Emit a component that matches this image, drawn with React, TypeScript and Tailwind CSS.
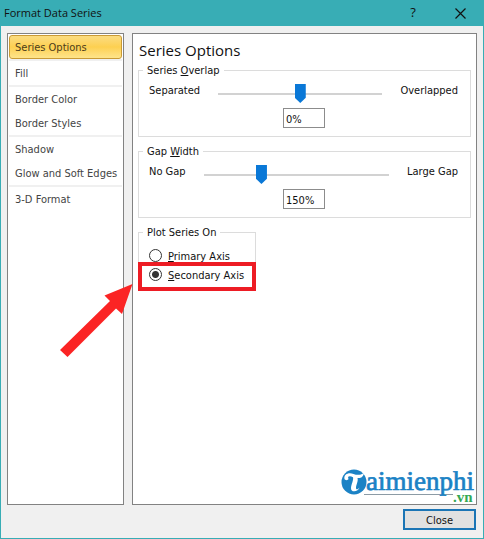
import { useState } from 'react';
import type { ReactNode } from 'react';

const sections = [
  ['Series Options'],
  ['Fill'],
  ['Border Color', 'Border Styles'],
  ['Shadow', 'Glow and Soft Edges'],
  ['3-D Format'],
];

function Group({ title, children }: { title: ReactNode; children: ReactNode }) {
  return (
    <fieldset className="border border-[#dcdcdc]">
      <legend className="ml-1 px-1 h-4 leading-[18px]">{title}</legend>
      {children}
    </fieldset>
  );
}

type SliderGroupProps = {
  title: ReactNode;
  name: string;
  low: string;
  high: string;
  min: number;
  max: number;
  initial: number;
};

function SliderGroup({ title, name, low, high, min, max, initial }: SliderGroupProps) {
  const [value, setValue] = useState(initial);

  return (
    <Group title={title}>
      <div className="flex flex-col h-[58px] pl-[10px] pr-3 pt-1">
        <div className="flex items-start gap-[18px]">
          <span className="shrink-0 leading-[18px]">{low}</span>
          <input
            type="range"
            aria-label={name}
            min={min}
            max={max}
            value={value}
            onChange={(e) => setValue(Number(e.target.value))}
            className="min-w-0 flex-1 mt-[2px] h-5 appearance-none bg-transparent [&::-webkit-slider-runnable-track]:h-[2px] [&::-webkit-slider-runnable-track]:bg-[#d2d2d2] [&::-webkit-slider-thumb]:appearance-none [&::-webkit-slider-thumb]:w-[11px] [&::-webkit-slider-thumb]:h-[19px] [&::-webkit-slider-thumb]:-mt-[9px] [&::-webkit-slider-thumb]:bg-[#0a78d7] [&::-webkit-slider-thumb]:[clip-path:polygon(0_0,100%_0,100%_72%,50%_100%,0_72%)]"
          />
          <span className="shrink-0 leading-[18px]">{high}</span>
        </div>
        <input
          type="text"
          aria-label={`${name} value`}
          value={`${value}%`}
          onChange={(e) => setValue(Math.min(max, Math.max(min, parseInt(e.target.value) || 0)))}
          className="mt-1 ml-[134px] w-[42px] h-5 shrink-0 border border-[#8c8c8c] bg-white px-[2px] pt-[2px]"
        />
      </div>
    </Group>
  );
}

function AxisOption({ value, checked, onChange, children }: { value: string; checked: boolean; onChange: () => void; children: ReactNode }) {
  return (
    <label className="flex items-center gap-[6px] h-[19px]">
      <input
        type="radio"
        name="axis"
        value={value}
        checked={checked}
        onChange={onChange}
        className="appearance-none size-[13px] rounded-full border border-[#333] bg-white checked:bg-[radial-gradient(circle,#333_3px,transparent_4px)]"
      />
      <span className="leading-4 pt-[2px]">{children}</span>
    </label>
  );
}

function Logo() {
  return (
    <svg className="absolute right-0 bottom-0 w-[136px] h-10" viewBox="0 -4 136 40">
      <circle cx="14" cy="14" r="12.5" fill="#1b82c5" />
      <path
        d="M4.500 11C3.500 6 9 4 13.500 6C17.500 7.500 20.500 7 24 5C23 9.500 20.500 10.500 17.500 10C18.500 13 16 17 16 20C16 22 18 21.500 19.500 19.500C18.500 24 10.500 25 11 20C11.300 16 13.800 12 13 9.200C10 7.800 7 8 8.500 11C8 12.500 5 12.500 4.500 11Z"
        fill="white"
      />
      <path d="M24 26.500H113" stroke="#8c9ba5" strokeWidth="1" />
      <text x="26" y="22" fontSize="27" fontFamily="Liberation Serif, serif" fill="#1b82c5" stroke="#1b82c5" strokeWidth=".7" textRendering="geometricPrecision">
        aimienphi
      </text>
      <text x="113" y="34" fontSize="15" fontWeight="bold" fontFamily="Liberation Serif, serif" fill="#35a853">
        .vn
      </text>
    </svg>
  );
}

export default function App() {
  const [section, setSection] = useState('Series Options');
  const [axis, setAxis] = useState('secondary');

  return (
    <div className="min-h-screen flex flex-col border border-t-0 border-[#38adb5] bg-[#f0f0f0] font-['DejaVu_Sans_Condensed','DejaVu_Sans',sans-serif] text-[11px] text-[#111]">
      <header className="flex items-center h-[26px] pl-[3px] pr-[17px] bg-[#38adb5]">
        <h1 className="flex-1 text-[11px] font-['Open_Sans',sans-serif]">Format Data Series</h1>
        <button aria-label="Help" className="w-3 mr-9 text-[13px] font-['Open_Sans',sans-serif]">?</button>
        <button aria-label="Close window">
          <svg className="size-[11px]" viewBox="0 0 11 11" fill="none" stroke="#111" strokeWidth="1.200">
            <path d="M.5.500l10 10M10.500.500l-10 10" />
          </svg>
        </button>
      </header>

      <div className="flex-1 flex gap-2 px-[6px] pt-[7px]">
        <nav className="w-[117px] shrink-0 border border-[#828282] bg-white p-px divide-y-2 divide-[#f0f0f0]">
          {sections.map((group) => (
            <div key={group[0]}>
              {group.map((item) => (
                <button
                  key={item}
                  onClick={() => setSection(item)}
                  className={`block w-full h-6 pl-[5px] pt-[2px] text-left whitespace-nowrap rounded-[3px] border ${
                    item === section
                      ? 'border-[#c99a35] bg-linear-to-b from-[#fbdc80] via-[#fdd050] to-[#fee48a] text-[#4b3c1c]'
                      : 'border-transparent text-[#444]'
                  }`}
                >
                  {item}
                </button>
              ))}
            </div>
          ))}
        </nav>

        <main className="relative flex-1 min-w-0 flex flex-col gap-[6px] border border-[#828282] bg-white px-[5px] pt-[6px]">
          <h2 className="pl-px h-4 leading-5 text-[15px] font-['Open_Sans',sans-serif]">Series Options</h2>
          <SliderGroup
            title={<>Series <u>O</u>verlap</>}
            name="Series Overlap"
            low="Separated"
            high="Overlapped"
            min={-100}
            max={100}
            initial={0}
          />
          <SliderGroup
            title={<>Gap <u>W</u>idth</>}
            name="Gap Width"
            low="No Gap"
            high="Large Gap"
            min={0}
            max={500}
            initial={150}
          />
          <div className="relative w-[118px]">
            <Group title="Plot Series On">
              <div className="h-[50px] pl-[10px] pt-[6px]">
                <AxisOption value="primary" checked={axis === 'primary'} onChange={() => setAxis('primary')}>
                  <u>P</u>rimary Axis
                </AxisOption>
                <AxisOption value="secondary" checked={axis === 'secondary'} onChange={() => setAxis('secondary')}>
                  <u>S</u>econdary Axis
                </AxisOption>
              </div>
            </Group>
            {/* Callout around the secondary axis option */}
            <div className="pointer-events-none absolute inset-x-0 bottom-0 h-[29px] border-4 border-[#ed1c24]" />
            <svg className="pointer-events-none absolute right-full top-[60px] w-[80px] h-[76px]" viewBox="0 0 80 76">
              <path d="M74.500 0L46.500 11.500L52 17L2 66L9.500 73L58 24.500L64 30Z" fill="#fb2424" />
            </svg>
          </div>
          <Logo />
        </main>
      </div>

      <footer className="flex justify-end h-[33px] pt-1 pr-[7px]">
        <button className="w-[73px] h-[21px] border-2 border-[#1b75b5] bg-[#e1e1e1] pt-[2px]">Close</button>
      </footer>
    </div>
  );
}
